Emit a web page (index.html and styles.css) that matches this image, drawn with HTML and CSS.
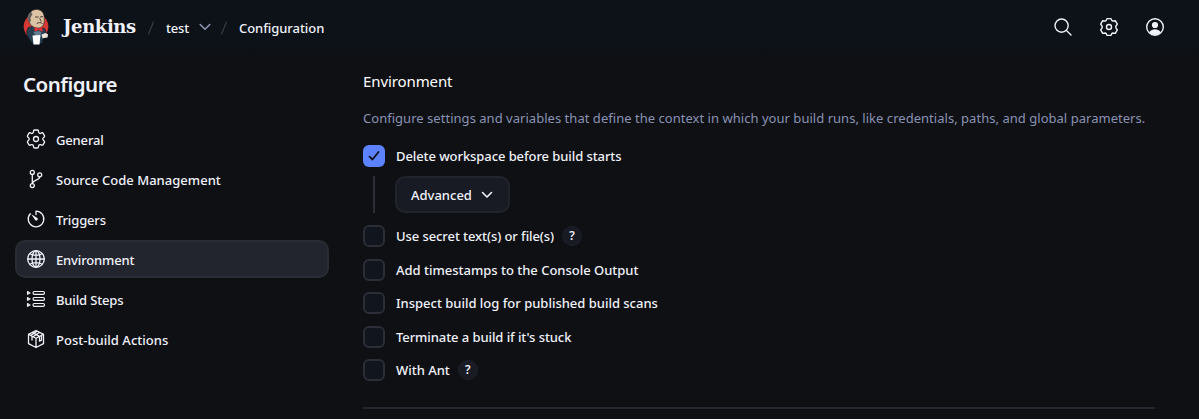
FILE: index.html
```html
<!DOCTYPE html>
<html lang="en">
<head>
<meta charset="utf-8">
<title>test Config - Jenkins</title>
<link rel="stylesheet" href="styles.css">
</head>
<body>
<header class="header">
  <svg class="logo" viewBox="0 0 26 36">
    <ellipse cx="13" cy="17.500" rx="12.300" ry="12.800" fill="#d33833"/>
    <path d="M5 19 3.500 23 5.500 29 9.500 34.500H19L20.500 29 24 27 22 20 17 17.500H9z" fill="#263f50" stroke="#111820" stroke-width=".6"/>
    <path d="M6 12C5 5 8 .5 13.500.5s8 4 7.800 9.500c.3 4-.8 7.500-4 8.700C13 20 7 17.500 6 12z" fill="#dcc3a4" stroke="#3a302b" stroke-width=".7"/>
    <path d="M8 3C4 5 3.800 9.500 6 13.500l2-1.500-.6-3L9.500 5z" fill="#64615f"/>
    <path d="M12.500 8h2.800M17.500 7.800h2.300M16.800 9.500l1.300 2.800M14 14.300c1.500-1 4-.9 5.300.1" fill="none" stroke="#4b3b33" stroke-width="1"/>
    <path d="M11.500 18l4 1.500 4-1.800v5L15.500 21 11.500 22.700z" fill="#e32f35"/>
    <path d="M10.500 23l5-1 3 1-1 3-5 1z" fill="#607f91"/>
    <path d="M9.500 26.500l8-.5-1 9.500h-6z" fill="#fff"/>
    <path d="M18.500 25.500l4-1.500 2.500 1.300-.5 3.200-5 .8z" fill="#eee5dc"/>
  </svg>
  <span class="brand">Jenkins</span>
  <svg class="slash" viewBox="0 0 8 14"><path d="M1.500 13 6.500 1"/></svg>
  <span class="crumb crumb-job">test</span>
  <svg class="chevron crumb-chevron" viewBox="0 0 12 8"><path d="M1.200 1.500 6 6.300l4.800-4.800"/></svg>
  <svg class="slash slash-last" viewBox="0 0 8 14"><path d="M1.500 13 6.500 1"/></svg>
  <span class="crumb crumb-page">Configuration</span>
  <nav class="actions">
    <svg class="icon" viewBox="0 0 20 20"><circle cx="8.600" cy="8.600" r="6.600"/><path d="m13.500 13.500 4.500 4.500"/></svg>
    <svg class="icon" viewBox="0 0 20 20"><path d="M8 1.600h4Q12.600 3.800 13.700 4 15 3.900 16.300 3.700L18.300 7.200Q16.700 9 16.700 10t1.600 2.800L16.300 16.300Q15 16.100 13.700 16 12.600 16.200 12 18.400H8Q7.400 16.200 6.300 16 5 16.100 3.700 16.300L1.700 12.800Q3.300 11 3.300 10T1.700 7.200L3.700 3.700Q5 3.900 6.300 4 7.400 3.800 8 1.600z"/><circle cx="10" cy="10" r="2.500"/></svg>
    <svg class="icon" viewBox="0 0 20 20"><circle cx="10" cy="10" r="8.300"/><circle class="solid" cx="10" cy="8" r="3.100"/><path class="solid" d="M4.300 15.300c1.500-2.300 3.500-3 5.700-3s4.200.7 5.700 3C14 17.200 12 18 10 18s-4-.8-5.700-2.700z"/></svg>
  </nav>
</header>
<div class="page">
  <aside class="sidebar">
    <h1 class="title">Configure</h1>
    <a class="item"><svg class="icon" viewBox="2 2 20 20"><path d="M9.594 3.940c.09-.542.56-.94 1.110-.94h2.593c.55 0 1.020.398 1.110.94l.213 1.281c.063.374.313.686.645.87.074.04.147.083.22.127.325.196.72.257 1.075.124l1.217-.456a1.125 1.125 0 0 1 1.370.49l1.296 2.247a1.125 1.125 0 0 1-.26 1.431l-1.003.827c-.293.241-.438.613-.43.992a7.723 7.723 0 0 1 0 .255c-.008.378.137.75.43.991l1.004.827c.424.35.534.955.26 1.430l-1.298 2.247a1.125 1.125 0 0 1-1.369.491l-1.217-.456c-.355-.133-.75-.072-1.076.124a6.470 6.470 0 0 1-.22.128c-.331.183-.581.495-.644.869l-.213 1.281c-.09.543-.56.94-1.110.94h-2.594c-.55 0-1.019-.398-1.110-.94l-.213-1.281c-.062-.374-.312-.686-.644-.87a6.520 6.520 0 0 1-.22-.127c-.325-.196-.72-.257-1.076-.124l-1.217.456a1.125 1.125 0 0 1-1.369-.49l-1.297-2.247a1.125 1.125 0 0 1 .26-1.431l1.004-.827c.292-.24.437-.613.43-.991a6.932 6.932 0 0 1 0-.255c.007-.38-.138-.751-.43-.992l-1.004-.827a1.125 1.125 0 0 1-.26-1.430l1.297-2.247a1.125 1.125 0 0 1 1.370-.491l1.216.456c.356.133.751.072 1.076-.124.072-.044.146-.086.22-.128.332-.183.582-.495.644-.869z"/><circle cx="12" cy="12" r="2.500"/></svg><span>General</span></a>
    <a class="item item-wide"><svg class="icon" viewBox="0 0 20 20"><circle cx="6.300" cy="3.400" r="2"/><circle cx="6.300" cy="16.600" r="2"/><circle cx="13.700" cy="5.800" r="2"/><path d="M6.300 5.400v9.200M13.700 7.800c0 3.700-6.500 2.700-7.200 6.200"/></svg><span>Source Code Management</span></a>
    <a class="item"><svg class="icon" viewBox="0 0 20 20"><path d="M10 5.500V2.200a7.800 7.800 0 1 1-5.700 2.500"/><path class="solid" d="M5.300 5.300l6.100 3.700q1 1.500-.2 2.300-1.200.6-2.100-.4z"/></svg><span>Triggers</span></a>
    <a class="item item-active"><svg class="icon" viewBox="0 0 20 20"><circle cx="10" cy="10" r="8.300"/><ellipse cx="10" cy="10" rx="4" ry="8.300"/><path d="M10 1.700v16.600M1.700 10h16.600M3.800 4.800c3.400 2 9 2 12.400 0M3.800 15.200c3.400-2 9-2 12.400 0"/></svg><span>Environment</span></a>
    <a class="item"><svg class="icon steps" viewBox="0 0 20 20"><rect x="7" y="2.500" width="11.500" height="2.800" rx="1.400"/><rect x="7" y="8.500" width="11.500" height="2.800" rx="1.400"/><rect x="7" y="14.500" width="11.500" height="2.800" rx="1.400"/><path d="M1.500 2.500 4 3.900 1.500 5.300zM1.500 8.500 4 9.900l-2.500 1.400zM1.500 14.500 4 15.900l-2.500 1.400z"/></svg><span>Build Steps</span></a>
    <a class="item item-wide"><svg class="icon" viewBox="0 0 20 20"><path d="M10 1.500 17.500 5.300v9.400L10 18.500l-7.500-3.800V5.300zM2.500 5.300 10 9.300l7.500-4M10 9.300v9.200M6.200 3.400l7.600 4.200M4.700 6.500l6-4M7 7.700l6-4M13.500 7.800v4.400l2-1V6.500M6 7.500v3.500"/></svg><span>Post-build Actions</span></a>
  </aside>
  <main class="content">
    <h2 class="heading">Environment</h2>
    <p class="description">Configure settings and variables that define the context in which your build runs, like credentials, paths, and global parameters.</p>
    <label class="option"><span class="box box-checked"><svg class="tick" viewBox="0 0 12 12"><path d="m1.500 6.700 3 2.800 6-7.500"/></svg></span><span>Delete workspace before build starts</span></label>
    <div class="nested"><button class="button"><span>Advanced</span><svg class="chevron" viewBox="0 0 12 8"><path d="M1.500 1.500 6 6l4.500-4.500"/></svg></button></div>
    <div class="options">
      <label class="option"><span class="box"></span><span>Use secret text(s) or file(s)</span><span class="help">?</span></label>
      <label class="option option-wide"><span class="box"></span><span>Add timestamps to the Console Output</span></label>
      <label class="option option-wide"><span class="box"></span><span>Inspect build log for published build scans</span></label>
      <label class="option"><span class="box"></span><span>Terminate a build if it's stuck</span></label>
      <label class="option option-wide"><span class="box"></span><span>With Ant</span><span class="help">?</span></label>
    </div>
    <hr class="rule">
  </main>
</div>
</body>
</html>
```
FILE: styles.css
```css
* { box-sizing: border-box; }
body {
  margin: 0;
  height: 419px;
  overflow: hidden;
  background: #0f1014;
  color: #f0f2fa;
  font: 500 13px/20px "Noto Sans", "Open Sans", sans-serif;
  letter-spacing: -0.2px;
}
svg { display: block; flex: none; fill: none; stroke: currentColor; stroke-linecap: round; stroke-linejoin: round; }
.header {
  display: flex;
  align-items: center;
  height: 60px;
  padding: 0 34px 6px 23px;
  background: linear-gradient(#0d1118 75%, #0f1014);
}
.logo { width: 26px; height: 36px; stroke: none; }
.brand {
  width: 73px;
  margin-left: 14px;
  font: bold 18px/24px "DejaVu Serif", serif;
  letter-spacing: -0.4px;
}
.slash { width: 8px; height: 14px; margin: 2px 0 0 11px; color: #353943; stroke-width: 1.3; }
.crumb { position: relative; top: 1px; }
.crumb-job { width: 24px; margin-left: 11px; }
.crumb-page { letter-spacing: -0.05px; }
.chevron { width: 12px; height: 8px; stroke-width: 1.6; }
.crumb-chevron { margin-left: 9px; color: #8d94b2; }
.slash-last { margin-right: 11px; margin-left: 9px; }
.actions { display: flex; gap: 26px; margin-left: auto; }
.icon { width: 20px; height: 20px; stroke-width: 1.4; }
.solid { fill: currentColor; stroke-width: 0; }
.page { display: flex; }
.sidebar { display: flex; flex-direction: column; gap: 2px; width: 363px; padding: 10px 34px 0 15px; }
.title { margin: 0 0 20px 8px; font-size: 20.500px; line-height: 28px; font-weight: 600; letter-spacing: -0.5px; }
.item { display: flex; align-items: center; gap: 10px; height: 38px; padding: 0 9px; border: 2px solid transparent; border-radius: 10px; letter-spacing: -0.15px; }
.item-wide { letter-spacing: 0.03px; }
.item .icon { stroke-width: 1.3; }
.item span { padding-top: 1px; }
.item .steps { stroke-width: 1.15; }
.item-active { background: #22252d; border-color: #292c34; }
.content { width: 792px; padding-top: 10px; }
.heading { margin: 0; color: #fff; font-size: 15px; line-height: 22px; font-weight: 400; letter-spacing: -0.1px; }
.description { margin: 16px 0 16px; color: #8a92b3; font-weight: 400; white-space: nowrap; letter-spacing: 0.03px; }
.option { display: flex; align-items: center; height: 23px; white-space: nowrap; letter-spacing: -0.08px; }
.option-wide { letter-spacing: -0.01px; }
.box { width: 22px; height: 22px; margin-right: 11px; border: 2px solid #2b2e37; border-radius: 6px; background: #11151d; }
.box-checked { display: grid; place-items: center; border: 0; background: #5c82ff; color: #0f1014; }
.tick { width: 12px; height: 12px; stroke-width: 1.8; }
.nested { margin: 9px 0 0 10px; height: 37px; padding-left: 20px; border-left: 2px solid #2b2e37; }
.button {
  display: flex; align-items: center; justify-content: space-between;
  width: 115px; height: 37px; padding: 0 15px 0 14px;
  border: 2px solid #21242b; border-radius: 10px;
  background: #181b23; color: inherit; font: inherit; letter-spacing: 0;
}
.options { display: flex; flex-direction: column; gap: 10.500px; margin-top: 11.800px; }
.help {
  width: 20px; height: 20px; margin-left: 8px;
  border: 1px solid #1e2129; border-radius: 50%; background: #181b23;
  font-size: 12px; line-height: 18px; font-weight: 600; text-align: center;
}
.rule { margin: 25.200px 0 0; border: 0; height: 2px; background: #24272f; }
```
